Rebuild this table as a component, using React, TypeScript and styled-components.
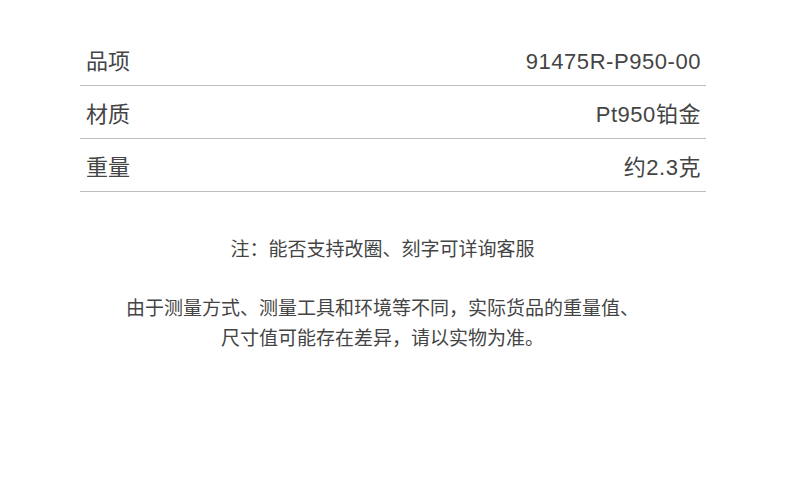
import React from "react";
import styled, { createGlobalStyle } from "styled-components";

const Global = createGlobalStyle`
  html, body { margin: 0; padding: 0; background: #ffffff; }
  body { font-family: "Liberation Sans", "Noto Sans CJK SC", sans-serif; color: #444; }
`;

const Page = styled.div`
  width: 790px;
  height: 489px;
  box-sizing: border-box;
  padding: 33px 84px 0 80px;
  display: flex;
  flex-direction: column;
`;

const Table = styled.div`
  display: flex;
  flex-direction: column;
`;

const Row = styled.div`
  display: flex;
  justify-content: space-between;
  align-items: center;
  height: 52px;
  box-sizing: content-box;
  border-bottom: 1px solid #bdbdbd;
  padding: 0 5px 0 6px;
  font-size: 22px;
  line-height: 22px;
  color: #444;
`;

const Label = styled.span`
  padding-top: 6px;
`;

const Value = styled.span`
  padding-top: 6px;
  letter-spacing: 0.55px;
`;

const Notes = styled.div`
  display: flex;
  flex-direction: column;
  align-items: center;
  text-align: center;
  font-size: 19px;
  color: #444;
  margin: 46px 21px 0 0;
`;

const Note = styled.p`
  margin: 0;
  line-height: 24px;
`;

const Paragraph = styled.p`
  margin: 32px 0 0;
  line-height: 30px;
`;

const rows = [
  { label: "品项", value: "91475R-P950-00" },
  { label: "材质", value: "Pt950铂金" },
  { label: "重量", value: "约2.3克" },
];

export default function App() {
  return (
    <>
      <Global />
      <Page>
        <Table>
          {rows.map((r) => (
            <Row key={r.label}>
              <Label>{r.label}</Label>
              <Value>{r.value}</Value>
            </Row>
          ))}
        </Table>
        <Notes>
          <Note>注：能否支持改圈、刻字可详询客服</Note>
          <Paragraph>
            由于测量方式、测量工具和环境等不同，实际货品的重量值、
            <br />
            尺寸值可能存在差异，请以实物为准。
          </Paragraph>
        </Notes>
      </Page>
    </>
  );
}
